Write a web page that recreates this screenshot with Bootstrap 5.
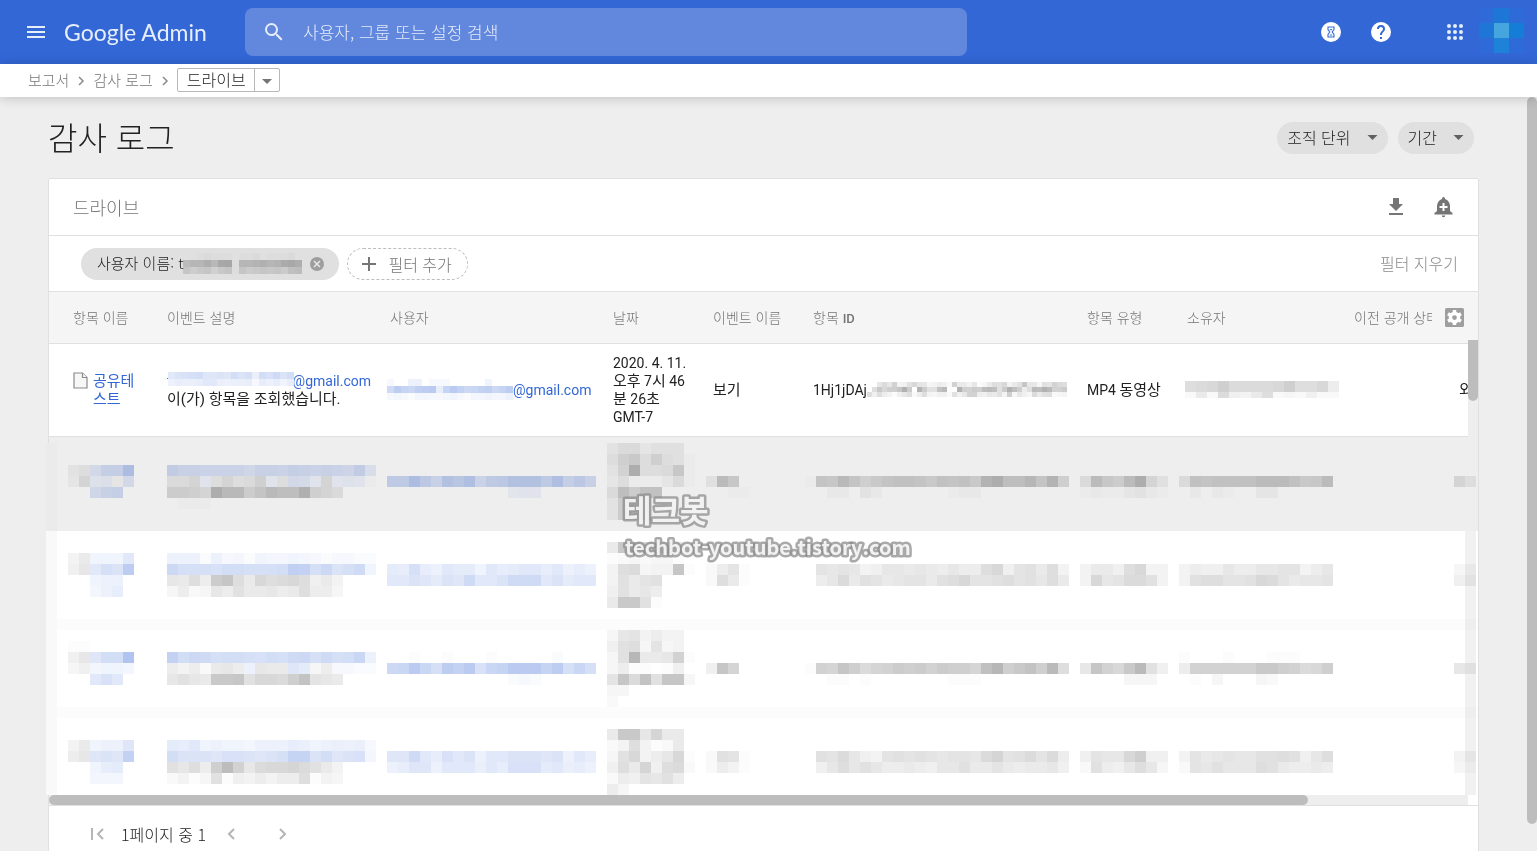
<!DOCTYPE html>
<html lang="ko">
<head>
<meta charset="utf-8">
<meta name="viewport" content="width=device-width, initial-scale=1">
<title>감사 로그 - Google Admin</title>
<link href="https://cdn.jsdelivr.net/npm/bootstrap@5.3.0/dist/css/bootstrap.min.css" rel="stylesheet">
<style>
  body { font-family: Roboto, "Noto Sans CJK KR", sans-serif; font-size: 14px; color: #212121; background: #eee; }
  a { text-decoration: none; }
  button { font-family: inherit; color: inherit; background: none; border: 0; padding: 0; }
  svg { display: block; flex: none; }
  .thin { font-family: "Noto Sans CJK KR Light", "Noto Sans CJK KR", Roboto, sans-serif; font-weight: 300; }

  .topbar { height: 64px; background: #3367d6; color: #e6edfb; padding: 0 13px 0 24px; }
  .brand { font-family: Lato, sans-serif; font-size: 23px; line-height: 32px; color: #e6edfb; width: 181px; padding-left: 16px; }
  .searchbox { width: 722px; height: 48px; border-radius: 8px; background: #6288de; padding-left: 17px; gap: 15px; }
  .searchbox input { background: none; border: 0; outline: 0; color: #fff; font-size: 17px; }
  .searchbox input::placeholder { color: #e4ebfa; opacity: 1; }

  .crumbs { height: 33px; padding-left: 28px; gap: 8px; box-shadow: 0 1px 12px rgba(0,0,0,.2); z-index: 2; }
  .crumbs a { color: #757575; font-size: 15px; line-height: 20px; padding-bottom: 2px; }
  .crumb-split { border: 1px solid #b8b8b8; border-radius: 2px; height: 24px; margin-bottom: 2px; }
  .crumb-split button { font-size: 16px; line-height: 18px; padding: 0 8px 2px 9px; height: 22px; }
  .crumb-split button + button { border-left: 1px solid #b8b8b8; padding: 3px 7px 0; }

  .workarea { padding: 25px 48px 0; }
  .page-name { font-size: 32px; line-height: 28px; margin: 0; padding-bottom: 4px; }
  .pill { height: 32px; border-radius: 16px; background: #e0e0e0; }
  .filter-group { gap: 10px; margin-right: 5px; }
  .filter-pill { font-size: 16px; line-height: 24px; padding: 0 10px 2px; gap: 16px; }
  .rail { width: 10px; }
  .rail-thumb { background: #bdbdbd; border-radius: 5px; height: calc(100% - 27px); }

  .panel { border: 1px solid #e0e0e0; border-radius: 2px; background: #fff; margin-top: 24px; }
  .panel-top { height: 57px; border-bottom: 1px solid #e0e0e0; padding: 0 24px; font-size: 18px; color: #757575; }
  .panel-filters { height: 56px; border-bottom: 1px solid #e0e0e0; padding: 0 20px 0 32px; gap: 8px; color: #757575; }
  .user-pill { font-size: 15px; color: #212121; padding: 0 15px 0 16px; }
  .user-pill [data-px] svg { mix-blend-mode: multiply; }
  .add-pill { height: 32px; border-radius: 16px; border: 1px dashed #bdbdbd; font-size: 16px; padding: 0 15px 0 13px; gap: 11px; }
  .clear-link { font-size: 16px; line-height: 24px; padding-bottom: 2px; color: #8a8a8a; }

  .log-table { table-layout: fixed; width: 1620px; border-collapse: collapse; }
  .log-table th { height: 51px; padding: 0 10px; background: #f5f5f5; border-bottom: 1px solid #e0e0e0; font-weight: 400; font-size: 14px; color: #757575; }
  .log-table th b { font-family: Roboto, sans-serif; font-weight: 500; font-size: 13px; }
  .log-table th:first-child, .log-table .entry td:first-child { padding-left: 24px; }
  .log-table .entry td { height: 93px; padding: 0 10px; border-bottom: 1px solid #e0e0e0; line-height: 18px; vertical-align: middle; }
  .log-table .entry a { color: #3367d6; }
  .log-table .ko { font-size: 15px; }
  .over-t { margin-left: -5px; background: #fff; position: relative; left: 1px; }
  .masked td { height: 88px; padding: 0; vertical-align: top; overflow: hidden; }
  .masked:nth-child(2) td { height: 95px; padding-top: 6px; background: #eee; }
  .masked:nth-child(n+4) td { background: linear-gradient(#fcfcfc 11px, #fff 11px); }
  .masked td svg { mix-blend-mode: multiply; }
  .masked td:nth-child(1) svg { margin-left: 19px; }
  .masked td:nth-child(2) svg { margin-left: 10px; }
  .masked td:nth-child(3) svg { margin-left: 7px; }
  .masked td:nth-child(4) svg { margin-left: 4px; }
  .masked td:nth-child(5) svg { margin-left: 3px; }
  .masked td:nth-child(6) svg { margin-left: 2px; }
  .masked td:nth-child(7) svg { margin-left: 3px; }
  .masked td:nth-child(8) svg { margin-left: 2px; }
  .masked td:nth-child(9) svg { margin-left: 110px; }

  .settings-cell { position: absolute; top: 0; right: 0; width: 46px; height: 50px; background: #f5f5f5; padding-left: 13px; }
  .v-track { position: absolute; top: 48px; right: 0; width: 10px; height: 97px; background: #eee; }
  .v-thumb { height: 61px; background: #bdbdbd; border-radius: 0 0 5px 5px; }
  .edge-left { position: absolute; left: -3px; bottom: 10px; width: 11px; height: 352px; background: linear-gradient(#ebebeb 88px, #f9f9f9 88px); }
  .edge-right { position: absolute; right: 2px; bottom: 10px; width: 11px; height: 264px; background: #f1f1f1; mix-blend-mode: multiply; }
  .h-track { height: 10px; margin-right: 10px; background: #eee; }
  .h-thumb { height: 10px; width: 88.7%; background: #bdbdbd; border-radius: 5px; }
  .pager { border-top: 1px solid #e0e0e0; height: 56px; padding-left: 40px; font-size: 16px; }
  .pager .prev-page { margin-left: 21px; }
  .pager .next-page { margin-left: 44px; }
  .watermark { position: absolute; left: 565px; top: 192px; }
</style>
</head>
<body>
<div class="d-flex flex-column vh-100 overflow-hidden">

  <header class="topbar d-flex align-items-center flex-shrink-0">
    <button type="button" aria-label="메뉴"><svg width="24" height="24" viewBox="0 0 24 24" fill="currentColor"><path d="M3 18h18v-2H3zm0-5h18v-2H3zm0-7v2h18V6z"/></svg></button>
    <a class="brand" href="#">Google Admin</a>
    <form class="searchbox thin d-flex align-items-center ms-3">
      <label for="q" aria-label="검색"><svg width="24" height="24" viewBox="0 0 24 24" fill="currentColor"><path d="M15.5 14h-.79l-.28-.27A6.47 6.47 0 0 0 16 9.500 6.500 6.500 0 1 0 9.500 16c1.610 0 3.090-.59 4.230-1.570l.27.28v.79l5 4.990L20.490 19zm-6 0a4.500 4.500 0 1 1 0-9 4.500 4.500 0 0 1 0 9z"/></svg></label>
      <input id="q" class="flex-grow-1" type="text" placeholder="사용자, 그룹 또는 설정 검색">
    </form>
    <div class="d-flex align-items-center ms-auto">
      <button type="button" aria-label="작업" class="me-4"><svg width="24" height="24" viewBox="0 0 24 24"><circle cx="12" cy="12" r="10" fill="#fff"/><path d="M9 7h6v2.500L13.200 12l1.800 2.500V17H9v-2.500l1.800-2.500L9 9.500z" fill="none" stroke="#3367d6" stroke-width="1.100"/><path d="M10.500 15.500 12 14l1.500 1.500zM10.500 9h3L12 10.500z" fill="#3367d6"/></svg></button>
      <button type="button" aria-label="도움말" class="me-5"><svg width="28" height="24" viewBox="0 0 24 24" fill="#fff"><path d="M12 2a10 10 0 1 0 0 20 10 10 0 0 0 0-20zm1 17h-2v-2h2zm2.070-7.750-.9.920C13.450 12.900 13 13.500 13 15h-2v-.5c0-1.100.45-2.100 1.170-2.830l1.240-1.260A2 2 0 1 0 10 9H8a4 4 0 1 1 8 0c0 .88-.36 1.680-.93 2.250z"/></svg></button>
      <button type="button" aria-label="앱"><svg width="24" height="24" viewBox="0 0 24 24" fill="currentColor"><g id="dots"><circle cx="6" cy="6" r="2"/><circle cx="12" cy="6" r="2"/><circle cx="18" cy="6" r="2"/></g><use href="#dots" y="6"/><use href="#dots" y="12"/></svg></button>
      <button type="button" aria-label="계정" class="ms-2 mb-1 ps-1"><svg width="45" height="45" viewBox="0 0 3 3" shape-rendering="crispEdges"><path fill="#2f6bd8" d="M0 0h3v3H0z"/><path fill="#1e76d6" d="M1 0h1v1H1zM0 1h1v1H0z"/><path fill="#147dd5" d="M2 1h1v1H2z"/><path fill="#1d82d8" d="M1 2h1v1H1z"/><path fill="#46a5df" d="M1 1h1v1H1z"/></svg></button>
    </div>
  </header>

  <nav class="crumbs thin d-flex align-items-center bg-white position-relative flex-shrink-0" aria-label="탐색경로">
    <a href="#">보고서</a>
    <svg width="8" height="10" viewBox="0 0 8 10" fill="none" stroke="#8a8a8a" stroke-width="1.500"><path d="m2 1 4 4-4 4"/></svg>
    <a href="#">감사 로그</a>
    <svg width="8" height="10" viewBox="0 0 8 10" fill="none" stroke="#8a8a8a" stroke-width="1.500"><path d="m2 1 4 4-4 4"/></svg>
    <div class="crumb-split d-flex">
      <button type="button">드라이브</button>
      <button type="button" aria-label="로그 선택"><svg width="10" height="5" viewBox="0 0 10 5" fill="#757575"><path d="M0 0h10L5 5z"/></svg></button>
    </div>
  </nav>

  <div class="d-flex flex-grow-1 overflow-hidden">
    <main class="workarea flex-grow-1 overflow-hidden">
      <div class="d-flex align-items-center justify-content-between">
        <h1 class="page-name thin">감사 로그</h1>
        <div class="filter-group d-flex">
          <button type="button" class="pill filter-pill thin d-flex align-items-center">조직 단위 <svg width="11" height="5" viewBox="0 0 10 5" fill="#616161"><path d="M0 0h10L5 5z"/></svg></button>
          <button type="button" class="pill filter-pill thin d-flex align-items-center">기간 <svg width="11" height="5" viewBox="0 0 10 5" fill="#616161"><path d="M0 0h10L5 5z"/></svg></button>
        </div>
      </div>

      <section class="panel">
        <div class="panel-top thin d-flex align-items-center">
          <span>드라이브</span>
          <button type="button" class="ms-auto" aria-label="다운로드"><svg width="24" height="24" viewBox="0 0 24 24" fill="#757575"><path d="M19 9h-4V3H9v6H5l7 7zM5 18v2h14v-2z"/></svg></button>
          <button type="button" class="ms-4" aria-label="알림 만들기"><svg width="22" height="24" viewBox="0 0 22 24" fill="#757575"><path d="M20.500 19.500H2.500v-1.600L5 16v-5c0-3.300 2-6.200 5-7.100V3.500a1.500 1.500 0 0 1 3 0v.4c3 .9 5 3.800 5 7.100v5l2.500 1.900zM9.700 20.500h3.600a1.800 1.800 0 0 1-3.600 0zM15.500 11h-3V8h-2v3h-3v2h3v3h2v-3h3z"/></svg></button>
        </div>

        <div class="panel-filters thin d-flex align-items-center">
          <div class="pill user-pill d-flex align-items-center"><span>사용자 이름: t</span><span data-px="..abaaa.aab.aaab./nppsouvappqrpqtus/jgijfikajhijijhlm" data-cell="7"></span>
            <button type="button" class="ms-2" aria-label="필터 삭제"><svg width="14" height="14" viewBox="0 0 14 14"><circle cx="7" cy="7" r="7" fill="#9e9e9e"/><path d="m4 4 6 6M10 4l-6 6" stroke="#e8e8e8" stroke-width="1.500"/></svg></button>
          </div>
          <button type="button" class="add-pill d-flex align-items-center"><svg width="16" height="16" viewBox="0 0 16 16" stroke="#757575" stroke-width="2"><path d="M8 1v14M1 8h14"/></svg>필터 추가</button>
          <a href="#" class="clear-link ms-auto">필터 지우기</a>
        </div>

        <div class="position-relative">
          <div class="overflow-hidden">
            <table class="log-table">
              <colgroup><col style="width:108px"><col style="width:223px"><col style="width:223px"><col style="width:100px"><col style="width:100px"><col style="width:274px"><col style="width:100px"><col style="width:167px"><col></colgroup>
              <thead>
                <tr class="thin"><th>항목 이름</th><th>이벤트 설명</th><th>사용자</th><th>날짜</th><th>이벤트 이름</th><th>항목 <b>ID</b></th><th>항목 유형</th><th>소유자</th><th>이전 공개 상태</th></tr>
              </thead>
              <tbody>
                <tr class="entry">
                  <td><div class="d-flex align-items-start" style="gap:5px"><svg width="15" height="17" viewBox="0 0 15 17" fill="#f7f7f7" stroke="#8a8a8a" stroke-width="1.200"><path d="M1 1h8.500L14 5.500V16H1z"/><path d="M9.500 1v4.500H14"/></svg><a href="#" class="ko">공유테<br>스트</a></div></td>
                  <td><a href="#" class="d-flex">t<span class="over-t" data-px="IKLMNJJKJNKMFNLOKN/EGFFGIIFEFFGBGEGDG" data-cell="7"></span>@gmail.com</a><span class="ko">이(가) 항목을 조회했습니다.</span></td>
                  <td style="padding-left:7px"><a href="#" class="d-flex align-items-center"><span data-px="B..EE.BBB.....D.../OURQTUVGRVSPQSTPRU/BCBACCBBCDBACCDCCE" data-cell="7"></span>@gmail.com</a></td>
                  <td>2020. 4. 11. <span class="ko">오후</span> 7<span class="ko">시</span> 46<br><span class="ko">분</span> 26<span class="ko">초</span><br>GMT-7</td>
                  <td class="ko">보기</td>
                  <td><div class="d-flex align-items-center">1Hj1jDAj<span data-px="..hlhodejmihcdfeboggdhacgkjmdgjshhcjiolk/.krmppszq.yqjjtwa.zpoqpvwujqzupfkwvzwooq/kekfdaehkbfkdceebjehoofehgjdpcheclgjkbcd" data-cell="5"></span></div></td>
                  <td>MP4 <span class="ko">동영상</span></td>
                  <td style="padding-left:8px"><span data-px="klmpllllmpkkmf/bgbledgkbcbebb" data-cell="11" data-crop="17"></span></td>
                  <td class="ko" style="padding-left:115px">외부</td>
                </tr>
                <tr class="masked">
                  <td data-px="//dfINNV/ciEFcI/..JMN."></td>
                  <td data-px="//OMMLLLLJMMLNMLMLKOG/ggiDfifgkDfIHDiDEDa/llkiwsslosqqvkig/.aaa"></td>
                  <td data-px="///PPVQMTRULPQTTTPUNQM/...........CDD....."></td>
                  <td data-px="dggceee./fkmfkfea/djwffgna/cfaaacga/gqlpp.../dlkk..../dlll...."></td>
                  <td data-px="///ern./..aa"></td>
                  <td data-px="///aonsokmoppompopmuwqqtouk/..bb.db......abb........"></td>
                  <td data-px="///grnlrwie/abaacdba"></td>
                  <td data-px="///gpopppprrrpmnr/.b.ba..cc....."></td>
                  <td data-px="///if"></td>
                </tr>
                <tr class="masked">
                  <td data-px="//dgDDDI/ehIMKU/..DEE./..CEG."></td>
                  <td data-px="//EEEAEBCADCCDCBABBAA/PMMMLNNMMMNTSMPKMOD/hgkfqskgmklmkegd/cfbchfjgghfgkffc"></td>
                  <td data-px="///HGMGEIHHDIGHIIGIEGE/IIKJHKJOIIKOOOIKHII"></td>
                  <td data-px="/grrmmlh./abcbcca./dklcddsa/djgij.../ejghf.../grrja..."></td>
                  <td data-px="///bfia/bkga"></td>
                  <td data-px="///.ihihdehhghgfhffkmeijgkd/.fhlgjighiigjkmiijkijhkg"></td>
                  <td data-px="///dggekmdd/dmhilljd"></td>
                  <td data-px="///dfeehffhhiidfh/djkkiijmlighhi"></td>
                  <td data-px="///cc/ee"></td>
                </tr>
                <tr class="masked">
                  <td data-px="//aa..../ehJNNY/ceCDDC/..ILI."></td>
                  <td data-px="///SNPOMNNMLNMOPMOMNQE/fdfbghfEhggJHcfBBAA/hjhgrrsjmmlptihg"></td>
                  <td data-px="///..a..a...a.....A.../PQVQMUSVLQRVVVRUMQM/...........ABA....."></td>
                  <td data-px="/chidfdd./ejkcicd./cjxgghoa/cfaa.ae./isltjssc/cc....../b......."></td>
                  <td data-px="////esn."></td>
                  <td data-px="////aonsplnoqpqoqppnuxprtpwk/..aa.a.......aaa........"></td>
                  <td data-px="////hsomrwje/....ccc."></td>
                  <td data-px="///a...a...aaa.../foooooorrpolmp/.a.c...cb....."></td>
                  <td data-px="////hf"></td>
                </tr>
                <tr class="masked">
                  <td data-px="///dgDEEJ/fhJKJS/..DGH./..CCC."></td>
                  <td data-px="///HGIDEDDCEEEGFDEFEFB/NKKKJLLKJKMRRKNJKLC/jhkfpvohlmmnljgd/bdacjaedfdffkadc"></td>
                  <td data-px="////JJOIGLIKEIIKKKJKEIG/EGJJEIIIFIGLLLHIFGE"></td>
                  <td data-px="//grrhngg./bdkdabg./cjmdfhma/ekgneklb/bfeihjf./fc......"></td>
                  <td data-px="////bjia/bfda"></td>
                  <td data-px="////.jilhedijijihiihlnijlilf/.ehkhjhffgfehhjggigfgghe"></td>
                  <td data-px="////eihhmpee/bjfehkhc"></td>
                  <td data-px="////dighihhjjkjehk/bihjhhhkjgffgf"></td>
                  <td data-px="////dd/cb"></td>
                </tr>
              </tbody>
            </table>
          </div>
          <div class="settings-cell d-flex align-items-center"><button type="button" aria-label="열 설정"><svg width="19" height="19" viewBox="0 0 24 24"><rect width="24" height="24" rx="2" fill="#9e9e9e"/><circle cx="12" cy="12" r="5.200" fill="none" stroke="#fff" stroke-width="4.400"/><path d="M12 2.500v4M12 17.500v4M3.800 7.250l3.400 2M16.800 14.750l3.400 2M3.800 16.750l3.400-2M16.800 9.250l3.400-2" stroke="#fff" stroke-width="4.500"/></svg></button></div>
          <div class="v-track"><div class="v-thumb"></div></div>
          <div class="edge-left"></div>
          <div class="edge-right"></div>
          <svg class="watermark" width="340" height="84" font-weight="700" font-family="Noto Sans CJK KR, sans-serif" fill="#fff" fill-opacity=".85" stroke="#8c8c8c" stroke-opacity=".75" stroke-width="5" stroke-linejoin="round" paint-order="stroke">
            <text x="9" y="38" font-size="31">테크봇</text>
            <text x="11" y="71" font-size="20">techbot-youtube.tistory.com</text>
          </svg>
          <div class="h-track"><div class="h-thumb"></div></div>
        </div>

        <div class="pager thin d-flex align-items-center">
          <button type="button" aria-label="첫 페이지"><svg width="16" height="14" viewBox="0 0 16 14" fill="none" stroke="#b5b5b5" stroke-width="2"><path d="M3 1v12M14 2 9 7l5 5"/></svg></button>
          <span class="ms-3">1페이지 중 1</span>
          <button type="button" class="prev-page" aria-label="이전"><svg width="8" height="14" viewBox="0 0 8 14" fill="none" stroke="#b5b5b5" stroke-width="2"><path d="M7 2 2 7l5 5"/></svg></button>
          <button type="button" class="next-page" aria-label="다음"><svg width="8" height="14" viewBox="0 0 8 14" fill="none" stroke="#b5b5b5" stroke-width="2"><path d="m1 2 5 5-5 5"/></svg></button>
        </div>
      </section>
    </main>
    <div class="rail flex-shrink-0"><div class="rail-thumb"></div></div>
  </div>
</div>

<script src="https://cdn.jsdelivr.net/npm/bootstrap@5.3.0/dist/js/bootstrap.bundle.min.js"></script>
<script>
  // Masked values: a-z are grey steps, A-Z blue steps, "." is empty, "/" ends a row.
  function shade(ch) {
    if (ch >= 'a') { const v = 255 - 3 * (ch.charCodeAt(0) - 96); return `rgb(${v},${v},${v})`; }
    const i = ch.charCodeAt(0) - 64;
    return `rgb(${252 - 3 * i},${253 - Math.round(i * 2.3)},${254 - Math.round(i * 0.6)})`;
  }
  document.querySelectorAll('[data-px]').forEach(el => {
    const size = +(el.dataset.cell || 11), rows = el.dataset.px.split('/');
    const w = Math.max(...rows.map(r => r.length)) * size, h = +(el.dataset.crop || rows.length * size);
    let out = '';
    rows.forEach((r, y) => [...r].forEach((c, x) => {
      if (c !== '.') out += `<rect x="${x * size}" y="${y * size}" width="${size}" height="${size}" fill="${shade(c)}"/>`;
    }));
    el.innerHTML = `<svg width="${w}" height="${h}" shape-rendering="crispEdges" aria-hidden="true">${out}</svg>`;
  });
</script>
</body>
</html>
